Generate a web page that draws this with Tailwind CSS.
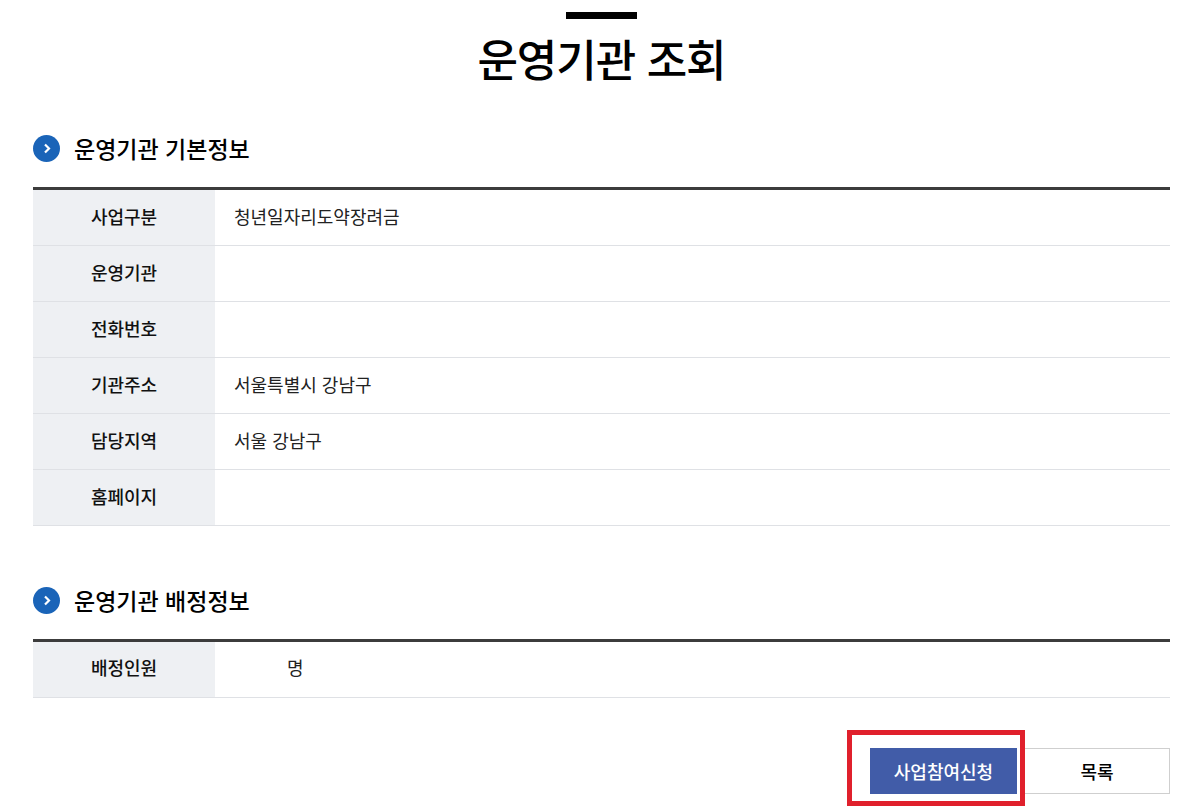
<!DOCTYPE html>
<html lang="ko">
<head>
<meta charset="utf-8">
<script src="https://cdn.jsdelivr.net/npm/@tailwindcss/browser@4"></script>
</head>
<body class="bg-white overflow-hidden font-['Noto_Sans_CJK_KR','Noto_Sans',sans-serif] text-[#111]">
<main class="ml-[33px] mr-[16px] h-[812px] flex flex-col">
  <header class="pt-[12px] flex flex-col items-center">
    <div class="w-[71px] h-[7px] bg-black"></div>
    <h1 class="mt-[9px] h-[60px] leading-[60px] text-[44px] font-medium text-black tracking-[-1px]">운영기관 조회</h1>
  </header>

  <h2 class="mt-[47px] h-[27px] flex items-center gap-[14px] text-[23px] font-medium text-black">
    <svg class="w-[27px] h-[27px]" viewBox="0 0 27 27"><circle cx="13.5" cy="13.5" r="13.5" fill="#1a64b8"/><path d="M12 9.5 L16 13.5 L12 17.5" fill="none" stroke="#fff" stroke-width="2.2"/></svg>
    운영기관 기본정보
  </h2>
  <table class="mt-[25px] w-full border-collapse border-t-[3px] border-[#3c3c3c] text-[18px] table-fixed">
    <tbody>
      <tr class="h-[57px] border-b border-[#dfe1e5]"><th class="w-[182px] pb-[3px] bg-[#eef0f3] font-medium">사업구분</th><td class="pl-[19px] pb-[3px] text-[#222]">청년일자리도약장려금</td></tr>
      <tr class="h-[56px] border-b border-[#dfe1e5]"><th class="pb-[2px] bg-[#eef0f3] font-medium">운영기관</th><td class="pl-[19px]"></td></tr>
      <tr class="h-[56px] border-b border-[#dfe1e5]"><th class="pb-[2px] bg-[#eef0f3] font-medium">전화번호</th><td class="pl-[19px]"></td></tr>
      <tr class="h-[56px] border-b border-[#dfe1e5]"><th class="pb-[2px] bg-[#eef0f3] font-medium">기관주소</th><td class="pl-[19px] pb-[2px] text-[#222]">서울특별시 강남구</td></tr>
      <tr class="h-[56px] border-b border-[#dfe1e5]"><th class="pb-[2px] bg-[#eef0f3] font-medium">담당지역</th><td class="pl-[19px] pb-[2px] text-[#222]">서울 강남구</td></tr>
      <tr class="h-[56px] border-b border-[#dfe1e5]"><th class="pb-[2px] bg-[#eef0f3] font-medium">홈페이지</th><td class="pl-[19px]"></td></tr>
    </tbody>
  </table>

  <h2 class="mt-[61px] h-[27px] flex items-center gap-[14px] text-[23px] font-medium text-black">
    <svg class="w-[27px] h-[27px]" viewBox="0 0 27 27"><circle cx="13.5" cy="13.5" r="13.5" fill="#1a64b8"/><path d="M12 9.5 L16 13.5 L12 17.5" fill="none" stroke="#fff" stroke-width="2.2"/></svg>
    운영기관 배정정보
  </h2>
  <table class="mt-[25px] w-full border-collapse border-t-[3px] border-[#3c3c3c] text-[18px] table-fixed">
    <tbody>
      <tr class="h-[57px] border-b border-[#dfe1e5]"><th class="w-[182px] pb-[4px] bg-[#eef0f3] font-medium">배정인원</th><td class="pl-[72px] pb-[4px] text-[#222]">명</td></tr>
    </tbody>
  </table>

  <div class="mt-[50px] flex justify-end">
    <div class="relative flex gap-[7px]">
      <button class="w-[147px] h-[46px] bg-[#415ca8] text-white text-[18px] font-medium">사업참여신청</button>
      <button class="w-[146px] h-[46px] border border-[#cfcfcf] bg-white text-black text-[18px] font-medium">목록</button>
      <div class="absolute left-[-23px] top-[-18px] w-[178px] h-[76px] border-[5px] border-[#e0202c]"></div>
    </div>
  </div>
</main>
</body>
</html>
